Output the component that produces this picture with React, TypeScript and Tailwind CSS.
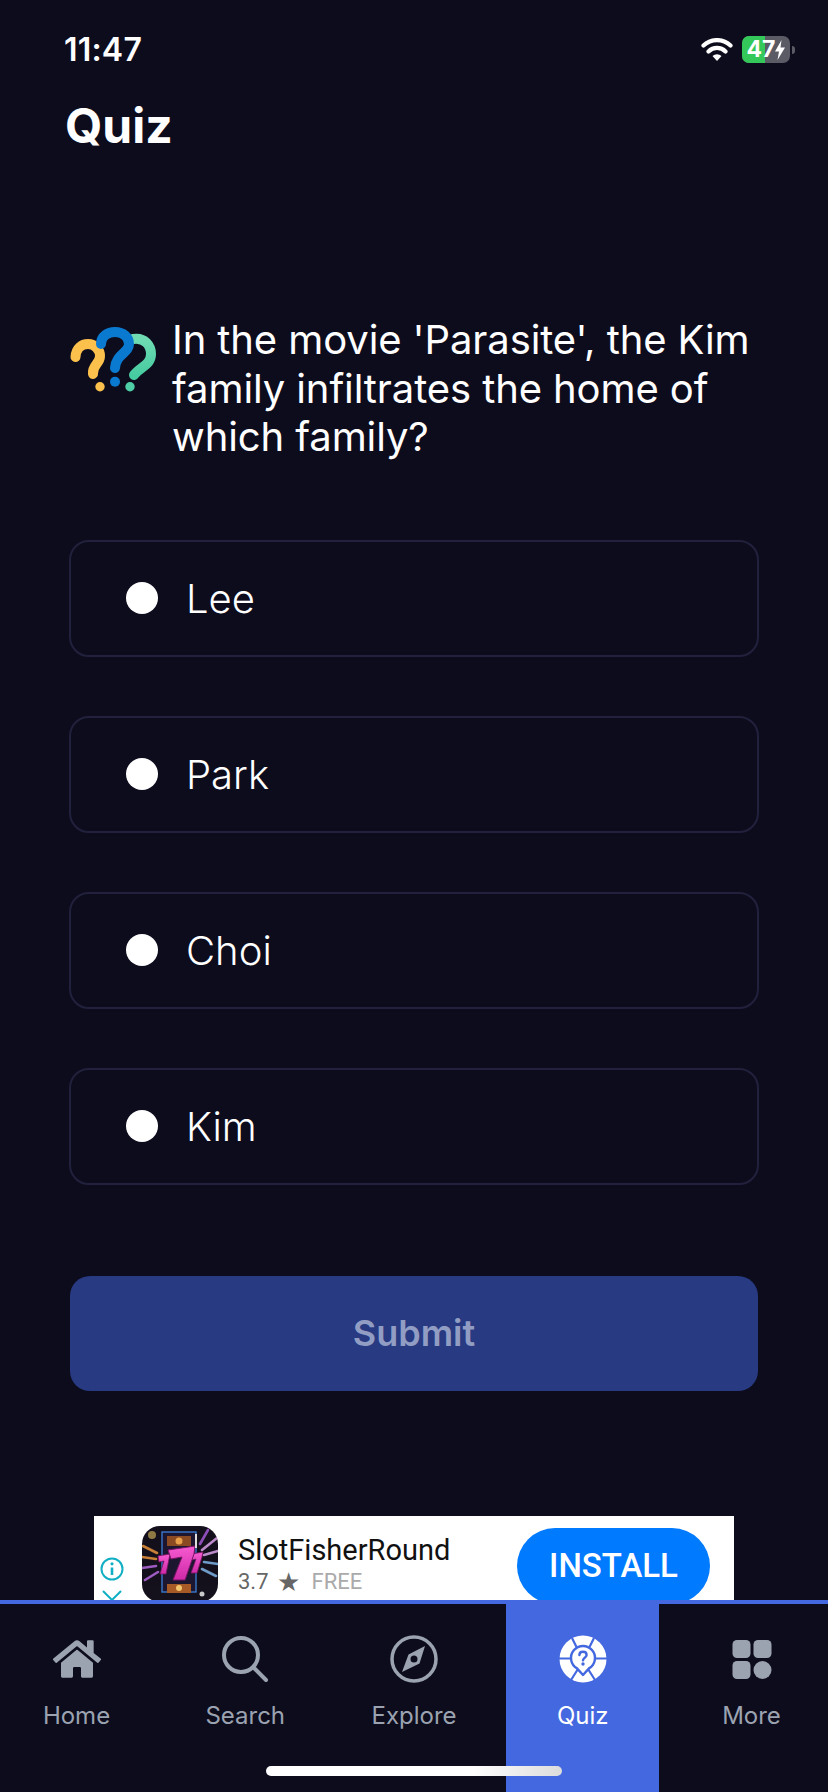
import { FaHome } from "react-icons/fa";

const options = ["Lee", "Park", "Choi", "Kim"];

function QuestionMarks() {
  return (
    <svg viewBox="0 0 86 65" className="h-[65px] w-[86px] shrink-0" fill="none" strokeWidth={10} strokeLinecap="round">
      <defs>
        <linearGradient id="qm-green" x1="0" y1="0" x2="0" y2="1">
          <stop offset="0" stopColor="#6fdcb4" />
          <stop offset="1" stopColor="#47cba0" />
        </linearGradient>
      </defs>
      <path d="M63 12C75 10 81 19 81 27C81 38 70 40 64 48" stroke="url(#qm-green)" />
      <circle cx="60" cy="59.7" r="4.7" fill="#4fcfa5" />
      <path d="M5.5 30C6 21 12 17 18 17C25 17 30 23 30 29C30 37 22 38 23 47" stroke="#fcc14c" />
      <circle cx="30" cy="59.7" r="4.7" fill="#fcc14c" />
      <path d="M31 17C31 9 38 5 45 5C53 5 59 10 59 17C59 26 46 27 45 41" stroke="#0a7ad1" />
      <circle cx="45" cy="54.7" r="5" fill="#0a7ad1" />
    </svg>
  );
}

function SearchIcon() {
  return (
    <svg viewBox="0 0 48 48" className="h-12 w-12" fill="none" stroke="#9ba3b1" strokeWidth={4} strokeLinecap="round">
      <circle cx="20" cy="20" r="17" />
      <path d="M33 33L45 45" />
    </svg>
  );
}

function CompassIcon() {
  return (
    <svg viewBox="0 0 48 48" className="h-12 w-12" fill="none">
      <circle cx="24" cy="24" r="22" stroke="#9ba3b1" strokeWidth={3.5} />
      <path
        fillRule="evenodd"
        d="M35 11L29.5 28.5L12 37L18.5 19.5ZM24 20.5A3.5 3.5 0 1 0 24 27.5A3.5 3.5 0 1 0 24 20.5Z"
        fill="#9ba3b1"
      />
    </svg>
  );
}

function QuizIcon() {
  return (
    <svg viewBox="0 0 48 48" className="h-12 w-12" fill="none">
      <circle cx="24" cy="24" r="23.5" fill="#fff" />
      <path d="M0 23.5H12M36 23.5H48M13 3L17.5 12M35 3L30.5 12M12 45L19 34M36 45L29 34" stroke="#4468e0" strokeWidth={2.2} />
      <path d="M24 40L18 33.4A12 12 0 1 1 30 33.4Z" fill="#fff" stroke="#4468e0" strokeWidth={2.4} strokeLinejoin="round" />
      <path d="M20.4 20C20.4 18 22.1 16.8 24 16.8C26 16.8 27.6 18.1 27.6 20C27.6 22.5 24.2 22.8 24 25.4" stroke="#4468e0" strokeWidth={2.4} strokeLinecap="round" />
      <circle cx="24" cy="29" r="1.7" fill="#4468e0" />
    </svg>
  );
}

function MoreIcon() {
  return (
    <svg viewBox="0 0 40 40" className="h-10 w-10" fill="#9ba3b1">
      <rect x="0.5" y="1" width="18" height="18" rx="4.5" />
      <rect x="21.5" y="1" width="18" height="18" rx="4.5" />
      <rect x="0.5" y="22" width="18" height="18" rx="4.5" />
      <circle cx="30.5" cy="31" r="9" />
    </svg>
  );
}

function SlotIcon() {
  return (
    <svg viewBox="0 0 76 76" className="h-[76px] w-[76px] shrink-0 rounded-[18px]">
      <defs>
        <linearGradient id="slot-seven" x1="0" y1="0" x2="0" y2="1">
          <stop offset="0" stopColor="#f65ad0" />
          <stop offset="1" stopColor="#cf2aa8" />
        </linearGradient>
      </defs>
      <rect width="76" height="76" fill="#15111c" />
      <g strokeWidth={2.6} strokeLinecap="round" opacity={0.85}>
        <path d="M1 20L15 27M0 31L14 33" stroke="#e8933c" />
        <path d="M0 42L14 40M3 54L16 46" stroke="#b56adf" />
        <path d="M75 12L60 24M76 25L62 29" stroke="#d9a3e8" />
        <path d="M76 38L62 36M74 50L60 43" stroke="#7fb4e8" />
        <path d="M66 4L58 18" stroke="#a45ad6" />
      </g>
      <circle cx="10" cy="9" r="4" fill="#8f7a44" />
      <rect x="20" y="6" width="34" height="60" fill="#1d1630" stroke="#3d7fd9" strokeWidth={1.3} />
      <rect x="25" y="10" width="24" height="10" fill="#8c4a22" />
      <circle cx="37" cy="15" r="3.5" fill="#e8a04a" />
      <rect x="25" y="58" width="24" height="9" fill="#a85a26" />
      <circle cx="37" cy="62" r="3" fill="#f2c46b" />
      <circle cx="60" cy="68" r="2.5" fill="#c9c9c9" />
      <path d="M16 30L28 28L27 33L24 48L18 48L22 35L17 36Z" fill="url(#slot-seven)" stroke="#7b1466" strokeWidth={0.8} />
      <path d="M50 28L61 26L60 31L55 47L49 47L54 33L50 34Z" fill="url(#slot-seven)" stroke="#7b1466" strokeWidth={0.8} />
      <path d="M26 24L53 20L52 28L43 54L31 54L40 31L29 33Z" fill="url(#slot-seven)" stroke="#7b1466" strokeWidth={1} />
      <rect x="53" y="8" width="2" height="14" fill="#ddd" />
    </svg>
  );
}

function AdBanner() {
  return (
    <div className="mx-auto flex h-[84px] w-[640px] shrink-0 overflow-hidden bg-white">
      <div className="ml-[5px] flex w-[25px] shrink-0 flex-col items-center pt-[41px]">
        <svg viewBox="0 0 24 24" className="h-6 w-6 shrink-0" fill="none" stroke="#12afc4" strokeWidth={2}>
          <circle cx="12" cy="12" r="10.5" />
          <path d="M12 10.5V18" strokeWidth={2.6} />
          <circle cx="12" cy="6.8" r="1.6" fill="#12afc4" stroke="none" />
        </svg>
        <svg viewBox="0 0 20 12" className="mt-[9px] h-3 w-5 shrink-0" fill="none" stroke="#12afc4" strokeWidth={2}>
          <path d="M1 1L10 10L19 1" />
        </svg>
      </div>
      <div className="ml-[18px] mt-[10px] shrink-0">
        <SlotIcon />
      </div>
      <div className="ml-5 mt-[14px] w-[279px] shrink-0 font-['Roboto',sans-serif]">
        <div className="text-[29px] leading-[40px] text-[#111]">SlotFisherRound</div>
        <div className="-mt-px flex items-center text-[22px] leading-[26px]">
          <span className="text-[#666]">3.7</span>
          <span className="ml-2 text-[26px] leading-none text-[#666]">★</span>
          <span className="ml-[12px] text-[#aaa]">FREE</span>
        </div>
      </div>
      <div className="mt-3 flex h-[76px] w-[193px] shrink-0 items-center justify-center rounded-full bg-[#007aff] pt-px font-['Roboto',sans-serif] text-[33px] font-medium text-white">
        INSTALL
      </div>
    </div>
  );
}

function NavItem({ label, icon, active }: { label: string; icon: React.ReactNode; active?: boolean }) {
  return (
    <div className={`flex w-[153px] flex-col items-center pt-[31px] ${active ? "bg-[#4468e0] text-white" : "text-[#9ba3b1]"}`}>
      <div className="flex h-12 items-center justify-center">{icon}</div>
      <span className="mt-[18px] text-[24px] leading-[30px]">{label}</span>
    </div>
  );
}

export default function App() {
  return (
    <div className="relative flex h-[1792px] w-[828px] flex-col overflow-hidden bg-[#0d0c1d] font-['Inter',sans-serif] text-white">
      <header className="flex h-[100px] shrink-0 items-start justify-between pl-[64px] pr-[33px] pt-[31px]">
        <span className="text-[32px] font-semibold leading-[38px] tracking-[0.2px]">11:47</span>
        <div className="flex items-center gap-[9px] pt-[5px]">
          <svg viewBox="0 0 32 23" className="h-[23px] w-8">
            <path d="M16 23L11.5 18A6.5 6.5 0 0 1 20.5 18Z" fill="#fff" />
            <path d="M7.5 13.5A12 12 0 0 1 24.5 13.5M2.5 7.5A19.5 19.5 0 0 1 29.5 7.5" fill="none" stroke="#fff" strokeWidth={4.2} strokeLinecap="round" />
          </svg>
          <div className="relative flex h-[27px] w-[48px] items-center justify-center overflow-hidden rounded-[7px] bg-[#5b5b66]">
            <div className="absolute inset-y-0 left-0 w-[23px] bg-[#34c759]" />
            <span className="relative text-[23px] font-bold leading-none">47</span>
            <svg viewBox="0 0 10 20" className="relative h-5 w-[10px]">
              <path d="M6.5 0L0 11.5H4L2.5 20L10 7.5H5.5Z" fill="#fff" />
            </svg>
          </div>
          <div className="-ml-[7px] h-2 w-[3px] rounded-r-full bg-[#5b5b66]" />
        </div>
      </header>

      <h1 className="ml-[65px] shrink-0 text-[48px] font-bold leading-[52px]">Quiz</h1>

      <section className="ml-[70px] mr-[60px] mt-[163px] flex shrink-0 items-start gap-[16px]">
        <div className="pt-[12px]">
          <QuestionMarks />
        </div>
        <p className="pt-px text-[40px] font-normal leading-[48.5px] tracking-[-0.1px]">
          In the movie 'Parasite', the Kim family infiltrates the home of which family?
        </p>
      </section>

      <div className="ml-[69px] mr-[69px] mt-[78px] flex shrink-0 flex-col gap-[59px]">
        {options.map((option) => (
          <div key={option} className="flex h-[117px] items-center rounded-[20px] border-2 border-[#22213d] pl-[55px]">
            <div className="h-8 w-8 rounded-full bg-white" />
            <span className="ml-[28px] pt-[2px] text-[40px] font-light leading-none">{option}</span>
          </div>
        ))}
      </div>

      <button className="ml-[70px] mt-[91px] flex h-[115px] w-[688px] shrink-0 items-center justify-center rounded-[20px] bg-[#273a82] text-[36px] font-semibold text-[#929dc3]">
        Submit
      </button>

      <div className="mt-[125px]">
        <AdBanner />
      </div>

      <nav className="flex h-[192px] shrink-0 justify-between border-t-4 border-[#4468e0]">
        <NavItem label="Home" icon={<FaHome className="h-12 w-12" />} />
        <NavItem label="Search" icon={<SearchIcon />} />
        <NavItem label="Explore" icon={<CompassIcon />} />
        <NavItem label="Quiz" icon={<QuizIcon />} active />
        <NavItem label="More" icon={<MoreIcon />} />
      </nav>

      <div className="absolute bottom-4 left-[266px] h-[10px] w-[296px] rounded-full bg-gradient-to-r from-white from-70% to-[#dcdcdc]" />
    </div>
  );
}
